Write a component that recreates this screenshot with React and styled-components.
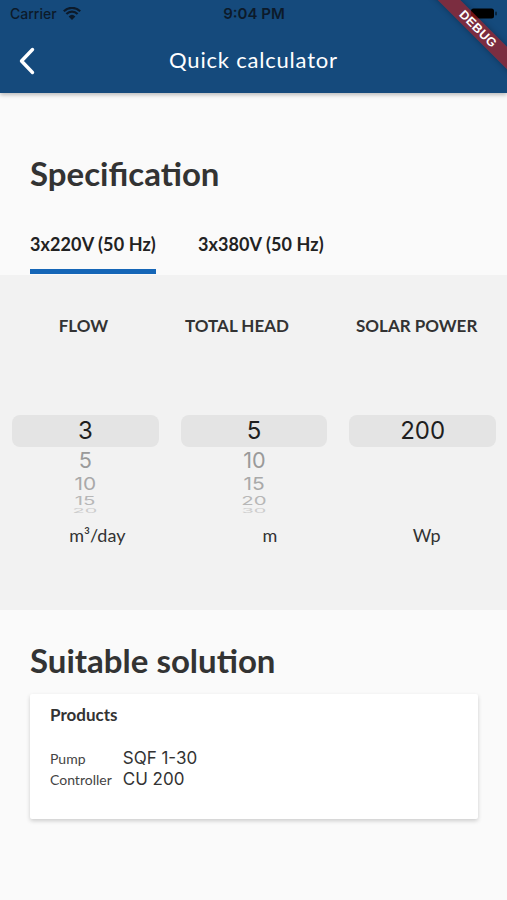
import React from "react";
import styled, { createGlobalStyle } from "styled-components";

const GlobalStyle = createGlobalStyle`
  html, body {
    margin: 0;
    padding: 0;
    background: #fafafa;
  }
  * {
    box-sizing: border-box;
  }
`;

const columns = [
  {
    title: "FLOW",
    titleShift: -2,
    unit: "m³/day",
    unitShift: 12,
    selected: "3",
    rest: [
      { value: "5", sx: 0.9, sy: 0.88, color: "#9a9a9a", h: 27 },
      { value: "10", sx: 0.87, sy: 0.72, color: "#a9a9a9", h: 20 },
      { value: "15", sx: 0.85, sy: 0.48, color: "#b7b7b7", h: 14 },
      { value: "20", sx: 0.83, sy: 0.28, color: "#cccccc", h: 6 },
    ],
  },
  {
    title: "TOTAL HEAD",
    titleShift: -17,
    unit: "m",
    unitShift: 16,
    selected: "5",
    rest: [
      { value: "10", sx: 0.9, sy: 0.88, color: "#9a9a9a", h: 27 },
      { value: "15", sx: 0.87, sy: 0.72, color: "#a9a9a9", h: 20 },
      { value: "20", sx: 0.85, sy: 0.48, color: "#b7b7b7", h: 14 },
      { value: "30", sx: 0.83, sy: 0.28, color: "#cccccc", h: 6 },
    ],
  },
  {
    title: "SOLAR POWER",
    titleShift: -6,
    unit: "Wp",
    unitShift: 4,
    selected: "200",
    rest: [],
  },
];

const products = [
  { label: "Pump", value: "SQF 1-30" },
  { label: "Controller", value: "CU 200" },
];

const WifiIcon = () => (
  <svg width="18" height="13" viewBox="0 0 18 13">
    <path d="M9 13 L5.6 9.4 A5 5 0 0 1 12.4 9.4 Z" fill="#0c1a2a" />
    <path d="M3.4 7 A8 8 0 0 1 14.6 7" stroke="#0c1a2a" strokeWidth="2.2" fill="none" />
    <path d="M0.8 4.2 A11.8 11.8 0 0 1 17.2 4.2" stroke="#0c1a2a" strokeWidth="2.2" fill="none" />
  </svg>
);

const BatteryIcon = () => (
  <svg width="27" height="11" viewBox="0 0 27 11">
    <rect x="0" y="0.5" width="23" height="10" rx="2.5" fill="#000" />
    <rect x="24" y="3.5" width="2" height="4" rx="1" fill="#000" opacity="0.5" />
  </svg>
);

const BackIcon = () => (
  <svg width="18" height="28" viewBox="0 0 18 28">
    <polyline
      points="14.5,2.5 3.5,14 14.5,25.5"
      fill="none"
      stroke="#fff"
      strokeWidth="3.4"
      strokeLinecap="round"
      strokeLinejoin="round"
    />
  </svg>
);

const App = () => {
  return (
    <Page>
      <GlobalStyle />
      <AppBar>
        <StatusBar>
          <Carrier>
            Carrier <WifiIcon />
          </Carrier>
          <Clock>9:04 PM</Clock>
          <BatterySlot>
            <BatteryIcon />
          </BatterySlot>
        </StatusBar>
        <NavRow>
          <BackButton>
            <BackIcon />
          </BackButton>
          <Title>Quick calculator</Title>
          <span />
        </NavRow>
        <DebugCorner>
          <DebugRibbon>DEBUG</DebugRibbon>
        </DebugCorner>
      </AppBar>

      <SpecSection>
        <Heading>Specification</Heading>
        <Tabs>
          <Tab>
            <TabLabel>3x220V (50 Hz)</TabLabel>
            <Indicator $active />
          </Tab>
          <Tab>
            <TabLabel>3x380V (50 Hz)</TabLabel>
            <Indicator />
          </Tab>
        </Tabs>
      </SpecSection>

      <PickerPanel>
        <PickerGrid>
          {columns.map((col) => (
            <ColumnTitle key={col.title} $shift={col.titleShift}>
              {col.title}
            </ColumnTitle>
          ))}
        </PickerGrid>
        <WheelGrid>
          {columns.map((col) => (
            <Wheel key={col.title}>
              <Selected>{col.selected}</Selected>
              {col.rest.map((item) => (
                <WheelSlot key={item.value} $h={item.h}>
                  <WheelValue $sx={item.sx} $sy={item.sy} $color={item.color}>
                    {item.value}
                  </WheelValue>
                </WheelSlot>
              ))}
            </Wheel>
          ))}
        </WheelGrid>
        <UnitGrid>
          {columns.map((col) => (
            <Unit key={col.title} $shift={col.unitShift}>
              {col.unit}
            </Unit>
          ))}
        </UnitGrid>
      </PickerPanel>

      <SolutionSection>
        <Heading>Suitable solution</Heading>
        <Card>
          <CardTitle>Products</CardTitle>
          <ProductTable>
            {products.map((p) => (
              <React.Fragment key={p.label}>
                <ProductLabel>{p.label}</ProductLabel>
                <ProductValue>{p.value}</ProductValue>
              </React.Fragment>
            ))}
          </ProductTable>
        </Card>
      </SolutionSection>
    </Page>
  );
};

const Page = styled.div`
  min-height: 100vh;
  background: #fafafa;
  font-family: "Lato", "Noto Sans", sans-serif;
  color: #333;
`;

const AppBar = styled.header`
  position: relative;
  z-index: 2;
  height: 93px;
  background: #154a7c;
  box-shadow: 0 2px 4px rgba(0, 0, 0, 0.25);
  overflow: hidden;
`;

const StatusBar = styled.div`
  height: 27px;
  display: grid;
  grid-template-columns: 1fr auto 1fr;
  align-items: center;
  padding: 0 9px 0 10px;
  color: #0c1a2a;
  font-family: "Inter", "Liberation Sans", sans-serif;
`;

const Carrier = styled.div`
  display: flex;
  align-items: center;
  gap: 6px;
  font-size: 14px;
  font-weight: 500;
`;

const Clock = styled.div`
  font-size: 15px;
  font-weight: 600;
`;

const BatterySlot = styled.div`
  display: flex;
  justify-content: flex-end;
  align-items: center;
`;

const NavRow = styled.div`
  height: 66px;
  display: grid;
  grid-template-columns: 60px 1fr 60px;
  align-items: center;
`;

const BackButton = styled.div`
  display: flex;
  align-items: center;
  padding-left: 18px;
  padding-top: 1px;
`;

const Title = styled.h1`
  margin: 0;
  text-align: center;
  color: #fff;
  font-size: 22px;
  font-weight: 400;
  letter-spacing: 0.8px;
  line-height: 26px;
`;

const DebugCorner = styled.div`
  position: absolute;
  top: 0;
  right: 0;
  width: 90px;
  height: 90px;
  overflow: hidden;
  pointer-events: none;
`;

const DebugRibbon = styled.div`
  position: absolute;
  left: -9px;
  top: 21px;
  width: 140px;
  height: 16px;
  transform: rotate(45deg);
  background: rgba(183, 28, 28, 0.63);
  box-shadow: 0 0 6px rgba(0, 0, 0, 0.3);
  color: #fff;
  font-family: "Liberation Sans", "Inter", sans-serif;
  font-weight: 900;
  font-size: 12.5px;
  line-height: 16px;
  text-align: center;
  letter-spacing: 0.4px;
`;

const SpecSection = styled.section`
  padding: 60px 30px 1px;
`;

const Heading = styled.h2`
  margin: 0;
  font-size: 33px;
  font-weight: 700;
  line-height: 40px;
  color: #333;
`;

const Tabs = styled.div`
  display: flex;
  gap: 42px;
  margin-top: 39px;
`;

const Tab = styled.div`
  display: flex;
  flex-direction: column;
`;

const TabLabel = styled.span`
  font-size: 18px;
  font-weight: 700;
  line-height: 24px;
  color: #222;
  letter-spacing: 0.1px;
`;

const Indicator = styled.div`
  height: 5px;
  margin-top: 13px;
  background: ${({ $active }) => ($active ? "#1566b7" : "transparent")};
`;

const PickerPanel = styled.section`
  background: #f2f2f2;
  padding: 39px 0 63px;
`;

const PickerGrid = styled.div`
  display: grid;
  grid-template-columns: repeat(3, 1fr);
  column-gap: 22px;
  padding: 0 11px 0 12px;
`;

const ColumnTitle = styled.div`
  text-align: center;
  font-size: 17px;
  font-weight: 700;
  line-height: 24px;
  color: #333;
  white-space: nowrap;
  padding-left: ${({ $shift }) => Math.max(0, $shift * 2)}px;
  padding-right: ${({ $shift }) => Math.max(0, -$shift * 2)}px;
`;

const WheelGrid = styled(PickerGrid)`
  padding-top: 77px;
  align-items: start;
`;

const Wheel = styled.div`
  display: flex;
  flex-direction: column;
  font-family: "Inter", "Liberation Sans", sans-serif;
`;

const Selected = styled.div`
  height: 32px;
  border-radius: 8px;
  background: #e4e4e4;
  text-align: center;
  font-size: 24px;
  line-height: 32px;
  color: #1e1e1e;
`;

const WheelSlot = styled.div`
  height: ${({ $h }) => $h}px;
  display: flex;
  align-items: center;
  justify-content: center;
  overflow: visible;
`;

const WheelValue = styled.span`
  display: block;
  font-size: 24px;
  line-height: 1;
  color: ${({ $color }) => $color};
  transform: scale(${({ $sx }) => $sx}, ${({ $sy }) => $sy});
`;

const UnitGrid = styled(PickerGrid)`
  margin-top: 9px;
`;

const Unit = styled(ColumnTitle)`
  font-size: 18px;
  font-weight: 400;
`;

const SolutionSection = styled.section`
  padding: 30px 29px 40px 30px;
`;

const Card = styled.div`
  margin-top: 14px;
  background: #fff;
  border-radius: 2px;
  box-shadow: 0 2px 4px rgba(0, 0, 0, 0.18);
  padding: 9px 20px 29px;
`;

const CardTitle = styled.h3`
  margin: 0;
  font-size: 17px;
  font-weight: 700;
  line-height: 24px;
  color: #333;
`;

const ProductTable = styled.div`
  margin-top: 21px;
  display: grid;
  grid-template-columns: auto 1fr;
  column-gap: 11px;
  align-items: baseline;
`;

const ProductLabel = styled.span`
  font-size: 14px;
  line-height: 21px;
  color: #444;
`;

const ProductValue = styled.span`
  font-family: "Inter", "Liberation Sans", sans-serif;
  font-size: 17px;
  line-height: 21px;
  color: #333;
`;

export default App;
